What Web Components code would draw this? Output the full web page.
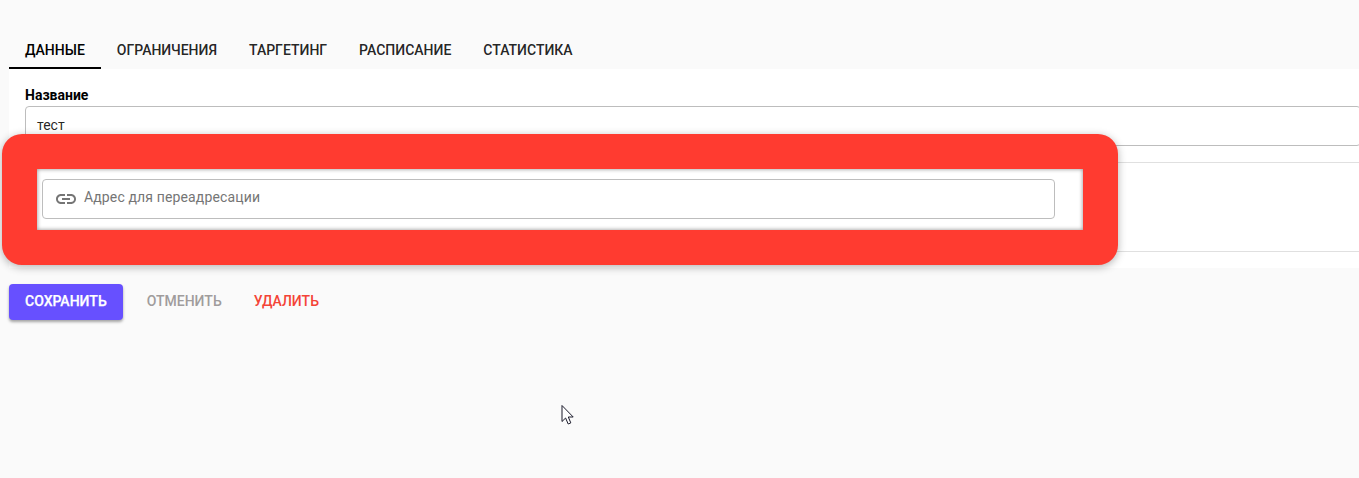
<!DOCTYPE html>
<html><head><meta charset="utf-8">
<style>
html,body{margin:0;padding:0;height:478px;overflow:hidden;background:#fafafa}
body{font-family:Roboto,"Liberation Sans",sans-serif;position:relative}
</style></head><body>
<template id="t-tab"><style>
:host{display:flex;align-items:center;height:36px;padding:0 16px;font:500 14px/36px Roboto,sans-serif;color:rgba(0,0,0,.87);box-sizing:border-box;border-bottom:2px solid transparent;white-space:nowrap}
:host([active]){border-bottom-color:#000;color:#000}
</style><slot></slot></template>
<template id="t-tabs"><style>
:host{display:flex;padding-top:33px;padding-left:9px;height:36px}
</style><slot></slot></template>
<template id="t-field"><style>
:host{display:block;box-sizing:border-box;height:40px;border:1px solid #bdbdbd;border-radius:4px;background:#fff;font:400 14px/36px Roboto,sans-serif;color:rgba(0,0,0,.87);padding-left:11px;white-space:nowrap}
</style><slot></slot></template>
<template id="t-panel"><style>
:host{display:block;margin-left:9px;background:#fff;height:199px;box-sizing:border-box;padding:17px 0 0 16px;overflow:hidden}
.label{font:700 14px/18px Roboto,sans-serif;color:#000;height:20px}
.name{margin-right:-2px}
.d1{height:1px;background:#e0e0e0;margin:16px 0 0 -16px}
.d2{height:1px;background:#e0e0e0;margin:88px 0 0 -16px}
</style><div class="label"><slot name="label"></slot></div><div class="name"><slot></slot></div><div class="d1"></div><div class="d2"></div></template>
<template id="t-actions"><style>
:host{display:flex;align-items:center;padding:16px 0 0 9px;gap:0}
</style><slot></slot></template>
<template id="t-btn"><style>
:host{display:flex;align-items:center;justify-content:center;box-sizing:border-box;height:36px;padding:0 16px 2px;font:500 14px/34px Roboto,sans-serif;border-radius:4px;white-space:nowrap;color:#a09c9c}
:host([primary]){background:#6750ff;color:#fff;box-shadow:0 2px 3px rgba(0,0,0,.35);margin-right:8px;-webkit-text-stroke:.25px #fff}
:host([danger]){color:#f44336}
</style><slot></slot></template>
<template id="t-callout"><style>
:host{display:block;position:absolute;left:2px;top:134px;width:1116px;height:131px;box-sizing:border-box;border:35px solid #ff3b30;border-radius:20px;background:#fff;box-shadow:0 2px 8px rgba(0,0,0,.3);background-clip:padding-box}
.in{position:absolute;inset:0;box-shadow:inset 0 0 4px rgba(0,0,0,.45);padding:10px 28px 0 5px;box-sizing:border-box}
.f{display:flex;align-items:center;box-sizing:border-box;height:40px;border:1px solid #bdbdbd;border-radius:4px;background:#fff;padding-left:12px;font:400 14px/20px Roboto,sans-serif;letter-spacing:.14px;color:#757575;white-space:nowrap}
svg{width:24px;height:24px;flex:none;margin-right:6px;margin-top:-1px;margin-left:-1px}
span{margin-top:-5px}
</style><div class="in"><div class="f"><svg viewBox="0 0 24 24" fill="#757575"><path d="M3.9 12c0-1.71 1.39-3.1 3.1-3.1h4V7H7c-2.76 0-5 2.24-5 5s2.24 5 5 5h4v-1.9H7c-1.71 0-3.1-1.39-3.1-3.1zM8 13h8v-2H8v2zm9-6h-4v1.9h4c1.71 0 3.1 1.39 3.1 3.1s-1.39 3.1-3.1 3.1h-4V17h4c2.76 0 5-2.24 5-5s-2.24-5-5-5z"/></svg><span><slot></slot></span></div></div></template>
<template id="t-cursor"><style>
:host{display:block;position:absolute;left:561px;top:404px;width:14px;height:22px}
svg{display:block}
</style><svg width="14" height="22" viewBox="0 0 14 22"><path d="M1 1.5V17.5L4.6 14L7.2 20L9.8 18.9L7.3 13H12.2Z" fill="#fff" stroke="#1a1a2a" stroke-width="1"/></svg></template>

<x-tabs><x-tab active>ДАННЫЕ</x-tab><x-tab>ОГРАНИЧЕНИЯ</x-tab><x-tab>ТАРГЕТИНГ</x-tab><x-tab>РАСПИСАНИЕ</x-tab><x-tab>СТАТИСТИКА</x-tab></x-tabs>
<x-panel><span slot="label">Название</span><x-field>тест</x-field></x-panel>
<x-actions><x-btn primary>СОХРАНИТЬ</x-btn><x-btn>ОТМЕНИТЬ</x-btn><x-btn danger>УДАЛИТЬ</x-btn></x-actions>
<x-callout>Адрес для переадресации</x-callout>
<x-cursor></x-cursor>
<script>
for(const [n,id] of [['x-tab','t-tab'],['x-tabs','t-tabs'],['x-field','t-field'],['x-panel','t-panel'],['x-actions','t-actions'],['x-btn','t-btn'],['x-callout','t-callout'],['x-cursor','t-cursor']]){
customElements.define(n,class extends HTMLElement{constructor(){super();this.attachShadow({mode:'open'}).appendChild(document.getElementById(id).content.cloneNode(true));}});
}
</script>
</body></html>
